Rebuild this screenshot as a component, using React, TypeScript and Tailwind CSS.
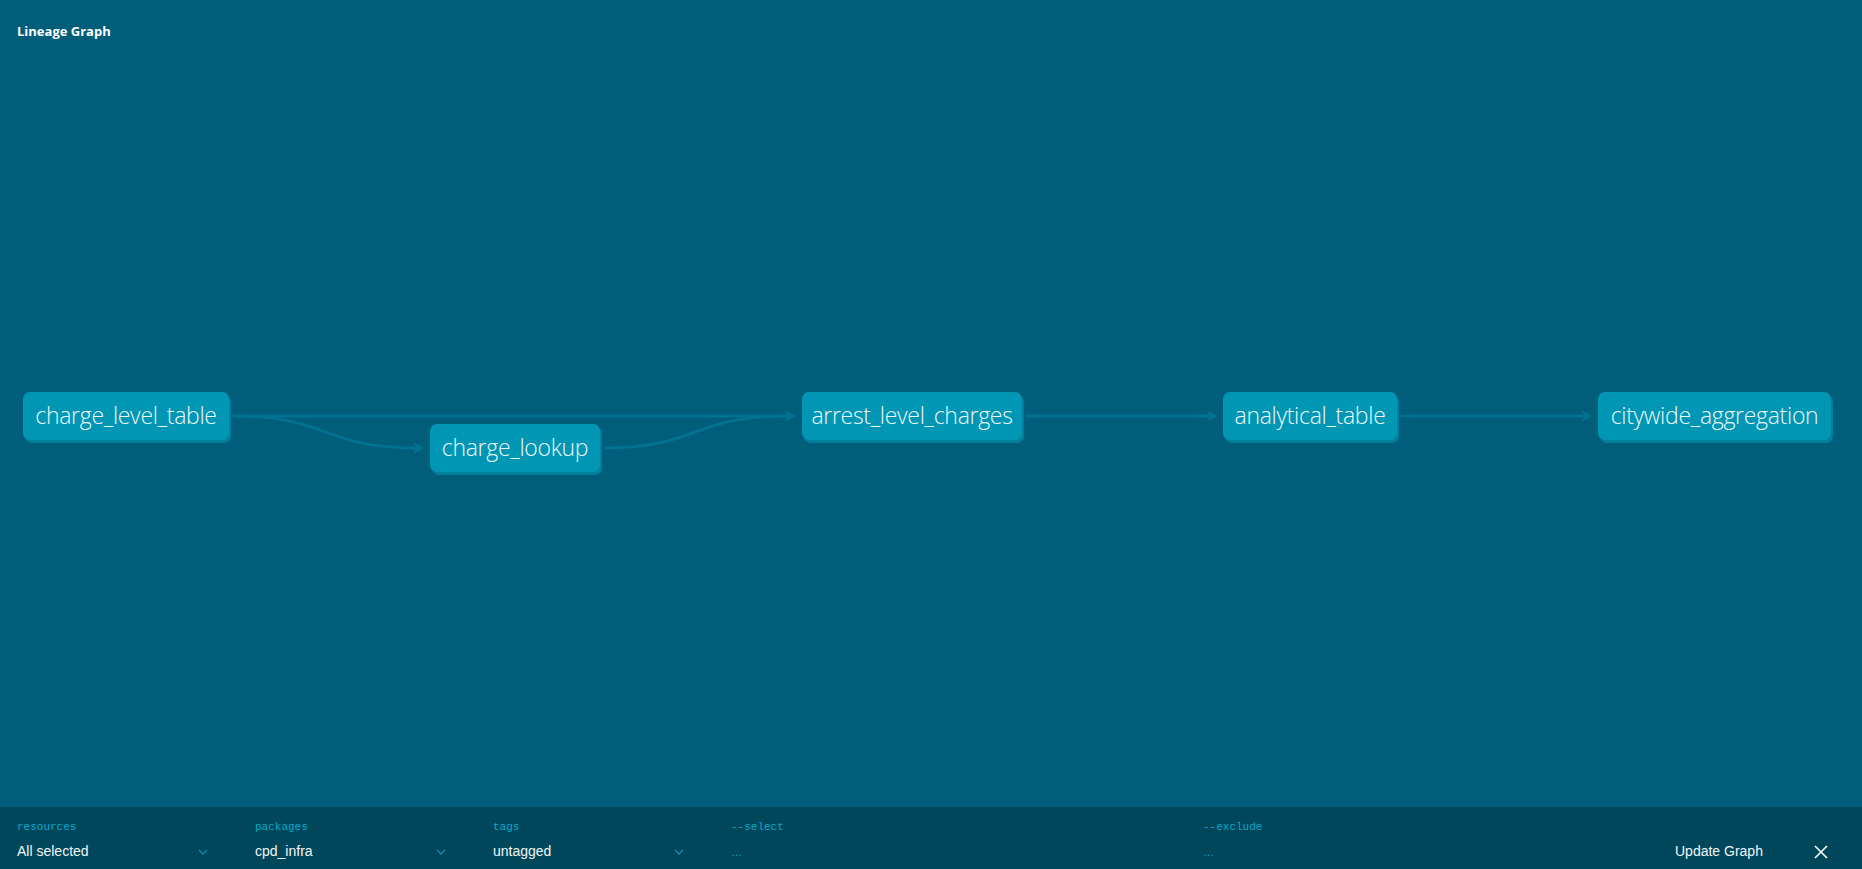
import React from "react";

type Node = { id: string; x: number; y: number; w: number };

const nodes: Node[] = [
  { id: "charge_level_table", x: 23, y: 392, w: 206 },
  { id: "charge_lookup", x: 430, y: 424, w: 170 },
  { id: "arrest_level_charges", x: 802, y: 392, w: 220 },
  { id: "analytical_table", x: 1223, y: 392, w: 174 },
  { id: "citywide_aggregation", x: 1598, y: 392, w: 233 },
];

const edges: { d: string; tip: [number, number] }[] = [
  { d: "M 233 416 L 790 416", tip: [796, 416] },
  { d: "M 233 416 C 330 416, 320 448, 418 448", tip: [424, 448] },
  { d: "M 604 448 C 700 448, 690 416, 790 416", tip: [796, 416] },
  { d: "M 1026 416 L 1212 416", tip: [1218, 416] },
  { d: "M 1401 416 L 1586 416", tip: [1592, 416] },
];

function Chevron() {
  return (
    <svg width="10" height="6" viewBox="0 0 10 6" className="shrink-0">
      <polyline points="1,1 5,5 9,1" fill="none" stroke="#0a8fae" strokeWidth="1.3" />
    </svg>
  );
}

function Dropdown({ label, value }: { label: string; value: string }) {
  return (
    <div className="w-[238px] flex flex-col">
      <div className="h-[14px] leading-[14px] text-[11px] text-[#0aa9ca] font-['Liberation_Mono',monospace]">
        {label}
      </div>
      <div className="mt-[9px] w-[191px] h-[17px] flex items-center justify-between">
        <span className="text-[14px] leading-[17px] text-[#f2f6f8] font-['Liberation_Sans',sans-serif]">
          {value}
        </span>
        <Chevron />
      </div>
    </div>
  );
}

function TextField({ label }: { label: string }) {
  return (
    <div className="w-[472px] flex flex-col">
      <div className="h-[14px] leading-[14px] text-[11px] text-[#0aa9ca] font-['Liberation_Mono',monospace]">
        {label}
      </div>
      <div className="mt-[9px] h-[17px] flex items-end pb-[2px] text-[11px] leading-[11px] text-[#0aa9ca] font-['Liberation_Sans',sans-serif]">
        …
      </div>
    </div>
  );
}

export default function App() {
  return (
    <div className="w-[1862px] h-[869px] flex flex-col bg-[#005e7a] overflow-hidden">
      <div className="relative flex-1">
        <div className="pt-[22px] pl-[17px] text-[13px] leading-[18px] font-bold text-white font-['Open_Sans',sans-serif]">
          Lineage Graph
        </div>
        <svg className="absolute inset-0" width="1862" height="807">
          {edges.map((e, i) => (
            <g key={i}>
              <path d={e.d} fill="none" stroke="#007493" strokeWidth="2.5" />
              <path
                d={`M ${e.tip[0]} ${e.tip[1]} L ${e.tip[0] - 11} ${e.tip[1] - 5.5} L ${e.tip[0] - 8} ${e.tip[1]} L ${e.tip[0] - 11} ${e.tip[1] + 5.5} Z`}
                fill="#007493"
              />
            </g>
          ))}
        </svg>
        {nodes.map((n) => (
          <div
            key={n.id}
            className="absolute h-[48px] pb-[2px] rounded-[7px] bg-[#0096b4] shadow-[2px_3px_0_#00809c] flex items-center justify-center text-[23px] text-[#eef7fa] font-['Open_Sans',sans-serif] font-light tracking-[-0.3px] whitespace-nowrap"
            style={{ left: n.x, top: n.y, width: n.w }}
          >
            {n.id}
          </div>
        ))}
      </div>
      <div className="h-[62px] shrink-0 bg-[#00475c] flex items-start pt-[13px] pl-[17px] pr-[34px]">
        <Dropdown label="resources" value="All selected" />
        <Dropdown label="packages" value="cpd_infra" />
        <Dropdown label="tags" value="untagged" />
        <TextField label="--select" />
        <TextField label="--exclude" />
        <div className="flex-1 flex items-center justify-between mt-[23px] h-[17px]">
          <span className="text-[14px] leading-[17px] text-[#f2f6f8] font-['Liberation_Sans',sans-serif]">
            Update Graph
          </span>
          <svg width="14" height="14" viewBox="0 0 14 14">
            <path d="M1 1 L13 13 M13 1 L1 13" stroke="#ffffff" strokeWidth="1.6" />
          </svg>
        </div>
      </div>
    </div>
  );
}
